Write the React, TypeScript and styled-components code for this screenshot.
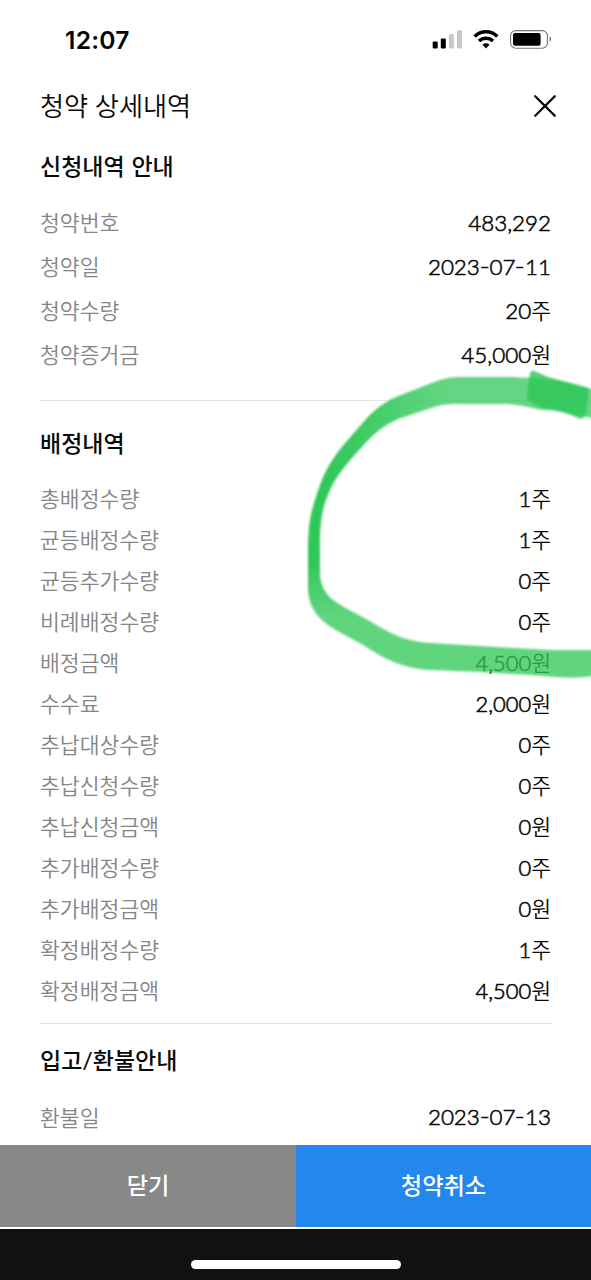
import React from "react";
import styled, { createGlobalStyle } from "styled-components";

const GlobalStyle = createGlobalStyle`
  * { box-sizing: border-box; }
  body {
    margin: 0;
    background: #fff;
    color: #0a0a0a;
    font-family: Lato, "Noto Sans CJK KR", sans-serif;
  }
`;

const Screen = styled.div`
  position: relative;
  display: flex;
  flex-direction: column;
  width: 591px;
  height: 1280px;
  overflow: hidden;
  background: #fff;
`;

const StatusBar = styled.header`
  display: flex;
  flex: none;
  align-items: center;
  justify-content: space-between;
  height: 80px;
  padding: 0 39px 0 65px;
`;

const Clock = styled.time`
  font: 600 24.6px/30px Inter, sans-serif;
  letter-spacing: 0.25px;
  color: #050505;
`;

const StatusIcons = styled.svg`
  display: block;
  width: 120px;
  height: 24px;
`;

const TitleBar = styled.div`
  display: flex;
  flex: none;
  align-items: center;
  justify-content: space-between;
  height: 52px;
  padding: 0 34px 0 40px;
`;

const Title = styled.h1`
  margin: 0;
  padding-bottom: 2px;
  font: 350 26.2px/36px "Noto Sans CJK KR", sans-serif;
  word-spacing: 0.8px;
`;

const CloseButton = styled.button`
  width: 24px;
  height: 24px;
  padding: 0;
  border: 0;
  background: none;
  svg { display: block; }
`;

const Content = styled.main`
  flex: 1;
  min-height: 0;
  padding: 0 39px 0 40px;
  overflow: hidden;
`;

const Section = styled.section<{ $height: number; $divided?: boolean }>`
  height: ${(p) => p.$height}px;
  border-bottom: ${(p) => (p.$divided ? "1px solid #e4e4e4" : "0")};
`;

const Heading = styled.h2<{ $height: number; $top?: number }>`
  display: flex;
  align-items: center;
  height: ${(p) => p.$height}px;
  padding-top: ${(p) => p.$top ?? 0}px;
  margin: 0;
  font-size: 23px;
  line-height: 32px;
  font-weight: 500;
  word-spacing: 1px;
`;

const List = styled.dl`
  margin: 0;
  padding-right: 1px;
`;

const Row = styled.div<{ $height: number }>`
  display: flex;
  align-items: center;
  justify-content: space-between;
  height: ${(p) => p.$height}px;
  line-height: 32px;
`;

const Label = styled.dt`
  color: #858585;
  font: 350 21.6px/32px "Noto Sans CJK KR", sans-serif;
`;

const Value = styled.dd<{ $size: number }>`
  display: flex;
  align-items: baseline;
  margin: 0;
  padding-top: 1px;
  font-size: ${(p) => p.$size}px;
  font-weight: 300;
`;

const Figure = styled.span`
  -webkit-text-stroke: 0.6px #0a0a0a;
`;

const Unit = styled.span`
  font: 350 21.6px/32px "Noto Sans CJK KR", sans-serif;
`;

const Hyphen = styled.span`
  display: inline-block;
  width: 9.6px;
  text-align: center;
  transform: translateY(-1px) scaleX(1.2);
`;

const Footer = styled.div`
  display: flex;
  flex: none;
  height: 84px;
  border-bottom: 2px solid #fff;
`;

const FooterButton = styled.button<{ $primary?: boolean }>`
  width: ${(p) => (p.$primary ? "295px" : "296px")};
  padding: 0 0 4px;
  border: 0;
  background: ${(p) => (p.$primary ? "#2388ed" : "#888")};
  color: #fff;
  font: 500 23.2px/32px "Noto Sans CJK KR", sans-serif;
`;

const HomeArea = styled.div`
  display: flex;
  flex: none;
  justify-content: center;
  height: 51px;
  padding-top: 31px;
  background: #111;
`;

const HomeIndicator = styled.div`
  width: 210px;
  height: 9px;
  border-radius: 5px;
  background: #fff;
`;

const Marker = styled.svg`
  position: absolute;
  left: 0;
  top: 360px;
  pointer-events: none;
`;

type Item = { label: string; figure: string; unit?: string };

const application: Item[] = [
  { label: "청약번호", figure: "483,292" },
  { label: "청약일", figure: "2023-07-11" },
  { label: "청약수량", figure: "20", unit: "주" },
  { label: "청약증거금", figure: "45,000", unit: "원" },
];

const allotment: Item[] = [
  { label: "총배정수량", figure: "1", unit: "주" },
  { label: "균등배정수량", figure: "1", unit: "주" },
  { label: "균등추가수량", figure: "0", unit: "주" },
  { label: "비례배정수량", figure: "0", unit: "주" },
  { label: "배정금액", figure: "4,500", unit: "원" },
  { label: "수수료", figure: "2,000", unit: "원" },
  { label: "추납대상수량", figure: "0", unit: "주" },
  { label: "추납신청수량", figure: "0", unit: "주" },
  { label: "추납신청금액", figure: "0", unit: "원" },
  { label: "추가배정수량", figure: "0", unit: "주" },
  { label: "추가배정금액", figure: "0", unit: "원" },
  { label: "확정배정수량", figure: "1", unit: "주" },
  { label: "확정배정금액", figure: "4,500", unit: "원" },
];

const refund: Item[] = [{ label: "환불일", figure: "2023-07-13" }];

function Rows({ items, height, size = 22.4 }: { items: Item[]; height: number; size?: number }) {
  return (
    <List>
      {items.map(({ label, figure, unit }) => (
        <Row key={label} $height={height}>
          <Label>{label}</Label>
          <Value $size={size}>
            <Figure>
              {figure.split("-").map((part, i) => (
                <React.Fragment key={i}>
                  {i > 0 && <Hyphen>-</Hyphen>}
                  {part}
                </React.Fragment>
              ))}
            </Figure>
            {unit && <Unit>{unit}</Unit>}
          </Value>
        </Row>
      ))}
    </List>
  );
}

export default function App() {
  return (
    <>
      <GlobalStyle />
      <Screen>
        <StatusBar>
          <Clock>12:07</Clock>
          <StatusIcons viewBox="0 0 120 24">
            <rect x="0.7" y="13.6" width="5" height="6.8" rx="1" fill="#000" />
            <rect x="8.8" y="10.4" width="5" height="10" rx="1" fill="#000" />
            <rect x="16.9" y="6" width="5" height="14.4" rx="1.2" fill="#c8c8c8" />
            <rect x="25" y="2.2" width="5" height="18.2" rx="1.2" fill="#c8c8c8" />
            <g fill="none" stroke="#000" strokeWidth="3.5">
              <path d="M42.7 8.500a16 16 0 0 1 22.600 0" />
              <path d="M47 13.100a10 10 0 0 1 14 0" />
            </g>
            <path d="M54 20.400l-3.500-3.600a5 5 0 0 1 7 0z" fill="#000" />
            <rect x="78.6" y="2.6" width="36.8" height="17.6" rx="5" fill="none" stroke="#777" strokeWidth="1.1" />
            <rect x="81" y="5" width="27.6" height="12.8" rx="2" fill="#000" />
            <path d="M117.600 8.600v5.200c2-.9 2-4.300 0-5.200z" fill="#777" />
          </StatusIcons>
        </StatusBar>
        <TitleBar>
          <Title>청약 상세내역</Title>
          <CloseButton aria-label="닫기">
            <svg width="24" height="24" viewBox="0 0 24 24">
              <path d="M2.200 2.200l19.600 19.600M21.800 2.200l-19.600 19.600" stroke="#050505" strokeWidth="2.300" strokeLinecap="round" />
            </svg>
          </CloseButton>
        </TitleBar>
        <Content>
          <Section $height={269} $divided>
            <Heading $height={68}>신청내역 안내</Heading>
            <Rows items={application} height={44} />
          </Section>
          <Section $height={623} $divided>
            <Heading $height={76} $top={8}>배정내역</Heading>
            <Rows items={allotment} height={41.08} size={21.9} />
          </Section>
          <Section $height={121}>
            <Heading $height={72}>입고/환불안내</Heading>
            <Rows items={refund} height={41} />
          </Section>
        </Content>
        <Footer>
          <FooterButton>닫기</FooterButton>
          <FooterButton $primary>청약취소</FooterButton>
        </Footer>
        <HomeArea>
          <HomeIndicator />
        </HomeArea>
        <Marker width="591" height="330" viewBox="0 360 591 330">
          <defs>
            <filter id="soft" filterUnits="userSpaceOnUse" x="290" y="360" width="330" height="330">
              <feGaussianBlur stdDeviation="0.8" />
            </filter>
            <linearGradient id="ink" gradientUnits="userSpaceOnUse" x1="308" y1="0" x2="460" y2="0">
              <stop offset="0" stopColor="#30c758" />
              <stop offset="0.3" stopColor="#30c758" stopOpacity="0.95" />
              <stop offset="0.72" stopColor="#30c758" stopOpacity="0.8" />
              <stop offset="1" stopColor="#30c758" stopOpacity="0.74" />
            </linearGradient>
            <linearGradient id="inkLow" gradientUnits="userSpaceOnUse" x1="0" y1="560" x2="0" y2="615">
              <stop offset="0" stopColor="#30c758" />
              <stop offset="0.6" stopColor="#30c758" stopOpacity="0.86" />
              <stop offset="1" stopColor="#30c758" stopOpacity="0.77" />
            </linearGradient>
          </defs>
          <g filter="url(#soft)">
            <path
              fill="url(#ink)"
              d="M606 393L591 389L570 383C550 379 525 377 506 377L458 377C448 377 440 380 429 384L396 397C380 404 369 415 360 426C344 444 328 461 320 485C311 510 308 523 308 550L320 550C320 530 320 514 328 495C335 476 350 460 362 447C373 434 383 426 398 419L431 408C442 404 450 404 460 404L500 404C520 404 530 408 542 410C560 410 570 413 591 418L606 421Z"
            />
            <path
              fill="url(#inkLow)"
              d="M308 550L308 590C309 607 317 618 331 627C345 636 358 641 371 650C391 663 410 669 431 670L480 672L545 676C562 678 575 678 585 677L606 674L606 650L550 650L480 646L431 643C410 642 395 636 378 626C361 615 349 611 336 602C326 596 320 585 320 573L320 550Z"
            />
            <path fill="#30c758" fillOpacity="0.84" d="M528 387L530 373Q531 370 534 371L548 377L589 388L586 413Q584 421 578 418C568 413 553 410 540 407L527 400Z" />
          </g>
        </Marker>
      </Screen>
    </>
  );
}
